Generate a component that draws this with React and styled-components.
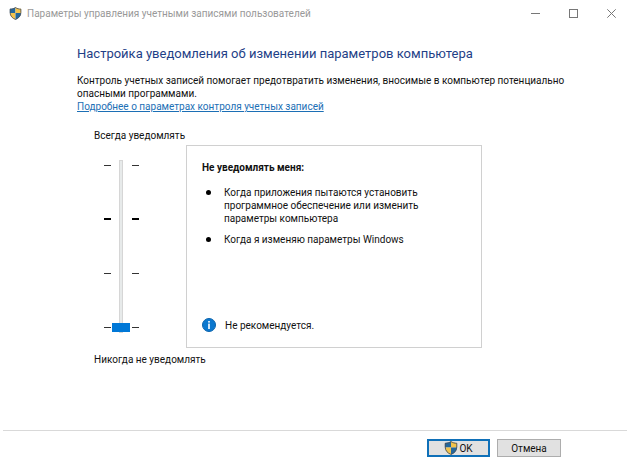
import React, { useState } from 'react';
import styled, { createGlobalStyle } from 'styled-components';

const GlobalStyle = createGlobalStyle`
    * {
        box-sizing: border-box;
    }
    html, body, #root {
        height: 100%;
    }
    body {
        margin: 0;
        background-color: #fff;
        color: #111;
        font-family: Roboto, 'Noto Sans', sans-serif;
        font-size: 10px;
        line-height: 13px;
    }
    button, input {
        font: inherit;
        color: inherit;
    }
`;

const Window = styled.div`
    display: flex;
    flex-direction: column;
    min-height: 100%;
`;

const TitleBar = styled.header`
    display: flex;
    align-items: center;
    height: 27px;
    padding-left: 9px;
`;

const WindowTitle = styled.span`
    flex: 1;
    margin-left: 5px;
    color: #999;
    white-space: nowrap;
`;

const WindowButton = styled.button`
    display: flex;
    justify-content: center;
    align-items: center;
    width: 38px;
    height: 27px;
    padding: 0;
    border: none;
    background: none;
    color: #777;
`;

const Content = styled.main`
    flex: 1;
    padding: 17px 40px 0 77px;
`;

const Heading = styled.h1`
    margin: 0 0 10px;
    color: #1f3f87;
    font-size: 13px;
    font-weight: normal;
    line-height: 20px;
`;

const Description = styled.p`
    margin: 0;
`;

const MoreLink = styled.a`
    color: #1c6fb5;
    text-decoration: underline;
`;

const Settings = styled.section`
    margin-top: 16px;
    padding: 0 108px 0 17px;
`;

const LevelLabel = styled.label`
    display: block;
`;

const LevelRow = styled.div`
    display: flex;
    margin: 3px 0 5px;
`;

const SliderBox = styled.div`
    display: flex;
    flex: none;
    width: 92px;
    padding: 15px 0 0 10px;
`;

const Ticks = styled.div`
    display: flex;
    flex-direction: column;
    justify-content: space-between;
    height: 172px;
    padding: 3px 0;
`;

const Tick = styled.span`
    display: flex;
    align-items: center;
    height: 4px;

    &::before {
        content: '';
        width: 7px;
        height: ${({ $bold }) => ($bold ? 2 : 1)}px;
        background-color: ${({ $bold }) => ($bold ? '#000' : '#333')};
    }
`;

const Slider = styled.input`
    appearance: none;
    writing-mode: vertical-lr;
    direction: rtl;
    width: 18px;
    height: 173px;
    margin: 0 2px 0 1px;
    background: none;
    outline: none;

    &::-webkit-slider-runnable-track {
        width: 4px;
        height: 100%;
        border: 1px solid #d6d6d6;
        background-color: #e7eaea;
    }

    &::-webkit-slider-thumb {
        appearance: none;
        width: 18px;
        height: 9px;
        margin-right: -8px;
        margin-left: -8px;
        background-color: #0078d7;
    }
`;

const Panel = styled.div`
    display: flex;
    flex: 1;
    flex-direction: column;
    min-height: 203px;
    padding: 15px 48px 15px 15px;
    border: 1px solid #d0d0d0;
`;

const PanelTitle = styled.h2`
    margin: 0 0 12px;
    font-size: 10px;
    font-weight: bold;
    line-height: 13px;
`;

const List = styled.ul`
    flex: 1;
    margin: 0;
    padding: 0;
    list-style: none;
`;

const ListItem = styled.li`
    display: flex;
    margin-bottom: 8px;

    &::before {
        content: '';
        flex: none;
        width: 5px;
        height: 5px;
        margin: 4px 13px 0 4px;
        border-radius: 50%;
        background-color: #000;
    }
`;

const Note = styled.div`
    display: flex;
    align-items: center;
    gap: 9px;
`;

const Footer = styled.footer`
    display: flex;
    justify-content: flex-end;
    gap: 7px;
    margin: 0 3px;
    padding: 8px 66px 4px 0;
    border-top: 1px solid #d9d9d9;
`;

const Button = styled.button`
    display: flex;
    justify-content: center;
    align-items: center;
    gap: 1px;
    width: ${({ $primary }) => ($primary ? 63 : 64)}px;
    height: 18px;
    padding: 0;
    border: ${({ $primary }) => ($primary ? '2px solid #0f70b8' : '1px solid #adadad')};
    background-color: #e1e1e1;
`;

const Shield = ({ size }) => (
    <svg width={size} height={size} viewBox="0 0 14 14" aria-hidden="true">
        <path d="M7 .3 C5.3 1.5 3.3 2 1 2 V6.500 H7Z" fill="#24679c" />
        <path d="M7 .3 C8.700 1.500 10.700 2 13 2 V6.500 H7Z" fill="#f3c34b" />
        <path d="M1 6.500 C1.200 10 3.700 12.400 7 13.700 V6.500Z" fill="#f3c34b" />
        <path d="M13 6.500 C12.800 10 10.300 12.400 7 13.700 V6.500Z" fill="#24679c" />
        <path
            d="M7 .6 C5.300 1.700 3.300 2.300 1.200 2.300 V6 C1.200 9.700 3.700 12.200 7 13.400 C10.300 12.200 12.800 9.700 12.800 6 V2.300 C10.700 2.300 8.700 1.700 7 .6Z"
            fill="none"
            stroke="#49515a"
            strokeWidth="0.9"
        />
    </svg>
);

const InfoIcon = () => (
    <svg width="14" height="14" viewBox="0 0 14 14" aria-hidden="true">
        <circle cx="7" cy="7" r="6.500" fill="#0b78cf" stroke="#0a63ad" />
        <rect x="6.200" y="3" width="1.600" height="1.600" fill="#fff" />
        <rect x="6.200" y="5.600" width="1.600" height="5.400" fill="#fff" />
    </svg>
);

const TickColumn = () => (
    <Ticks aria-hidden="true">
        <Tick />
        <Tick $bold />
        <Tick />
        <Tick />
    </Ticks>
);

const reasons = [
    'Когда приложения пытаются установить программное обеспечение или изменить параметры компьютера',
    'Когда я изменяю параметры Windows',
];

const App = () => {
    const [level, setLevel] = useState(0);

    return (
        <Window>
            <GlobalStyle />
            <TitleBar>
                <Shield size={13} />
                <WindowTitle>Параметры управления учетными записями пользователей</WindowTitle>
                <WindowButton aria-label="Свернуть">
                    <svg width="9" height="9" viewBox="0 0 9 9">
                        <path d="M0 4.500H9" stroke="currentColor" />
                    </svg>
                </WindowButton>
                <WindowButton aria-label="Развернуть">
                    <svg width="9" height="9" viewBox="0 0 9 9">
                        <rect x="0.500" y="0.500" width="8" height="8" fill="none" stroke="currentColor" />
                    </svg>
                </WindowButton>
                <WindowButton aria-label="Закрыть">
                    <svg width="9" height="9" viewBox="0 0 9 9">
                        <path d="M0.300 0.300L8.700 8.700M8.700 0.300L0.300 8.700" stroke="currentColor" />
                    </svg>
                </WindowButton>
            </TitleBar>

            <Content>
                <Heading>Настройка уведомления об изменении параметров компьютера</Heading>
                <Description>
                    Контроль учетных записей помогает предотвратить изменения, вносимые в компьютер потенциально опасными программами.
                </Description>
                <MoreLink href="#">Подробнее о параметрах контроля учетных записей</MoreLink>

                <Settings>
                    <LevelLabel htmlFor="level">Всегда уведомлять</LevelLabel>
                    <LevelRow>
                        <SliderBox>
                            <TickColumn />
                            <Slider
                                id="level"
                                type="range"
                                min="0"
                                max="3"
                                value={level}
                                onChange={e => setLevel(Number(e.target.value))}
                            />
                            <TickColumn />
                        </SliderBox>
                        <Panel>
                            <PanelTitle>Не уведомлять меня:</PanelTitle>
                            <List>
                                {reasons.map(reason => (
                                    <ListItem key={reason}>{reason}</ListItem>
                                ))}
                            </List>
                            <Note>
                                <InfoIcon />
                                <span>Не рекомендуется.</span>
                            </Note>
                        </Panel>
                    </LevelRow>
                    <LevelLabel htmlFor="level">Никогда не уведомлять</LevelLabel>
                </Settings>
            </Content>

            <Footer>
                <Button $primary>
                    <Shield size={14} />
                    OK
                </Button>
                <Button>Отмена</Button>
            </Footer>
        </Window>
    );
};

export default App;
